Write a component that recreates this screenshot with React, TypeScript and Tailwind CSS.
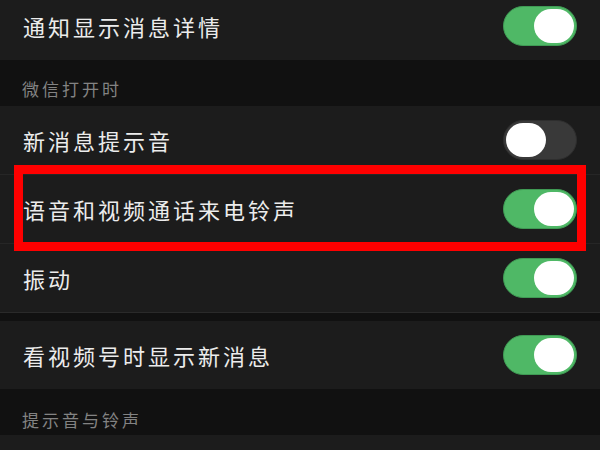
import React from "react";

const font = { fontFamily: '"Noto Sans CJK SC", "Noto Sans", sans-serif' };

function Toggle({ on }: { on: boolean }) {
  return (
    <div
      className={
        "relative w-[74px] h-[40px] rounded-full shrink-0 " +
        (on ? "bg-[#4fb866] border border-[#3f9a54]" : "bg-[#393939] border border-[#2e2e2e]")
      }
    >
      <div
        className={
          "absolute top-[2px] w-[40px] h-[34px] rounded-full bg-white " +
          (on ? "right-[2px]" : "left-[2px]")
        }
      />
    </div>
  );
}

function Row({
  label,
  on,
  className = "",
  children,
}: {
  label: string;
  on: boolean;
  className?: string;
  children?: React.ReactNode;
}) {
  return (
    <div
      className={
        "relative h-[68px] flex items-center justify-between pl-[23px] pr-[23px] bg-[#1c1c1c] " +
        className
      }
    >
      <span className="text-[22px] leading-[28px] tracking-[3px] text-[#ececec]">{label}</span>
      <Toggle on={on} />
      {children}
    </div>
  );
}

function Divider() {
  return <div className="h-px bg-[#262626]" />;
}

export default function App() {
  return (
    <div className="w-[600px] h-[450px] overflow-hidden bg-[#111111]" style={font}>
      <div className="-mt-[8px]">
        <Row label="通知显示消息详情" on={true} />
        <div className="h-[46px] pt-[19px] pl-[22px] bg-[#111111]">
          <span className="block text-[17px] leading-[20px] tracking-[3px] text-[#838383]">
            微信打开时
          </span>
        </div>
        <Row label="新消息提示音" on={false} />
        <Divider />
        <Row label="语音和视频通话来电铃声" on={true} className="z-10">
          <div className="absolute top-[-10px] bottom-[-8px] left-[14px] right-[14px] border-[9px] border-[#fe0000] pointer-events-none" />
        </Row>
        <Divider />
        <Row label="振动" on={true} />
        <div className="h-[9px] bg-[#111111] border-t border-[#2a2a2a]" />
        <Row label="看视频号时显示新消息" on={true} />
        <div className="h-[46px] pt-[21px] pl-[22px] bg-[#111111]">
          <span className="block text-[17px] leading-[20px] tracking-[3px] text-[#838383]">
            提示音与铃声
          </span>
        </div>
        <div className="h-[68px] bg-[#1c1c1c]" />
      </div>
    </div>
  );
}
